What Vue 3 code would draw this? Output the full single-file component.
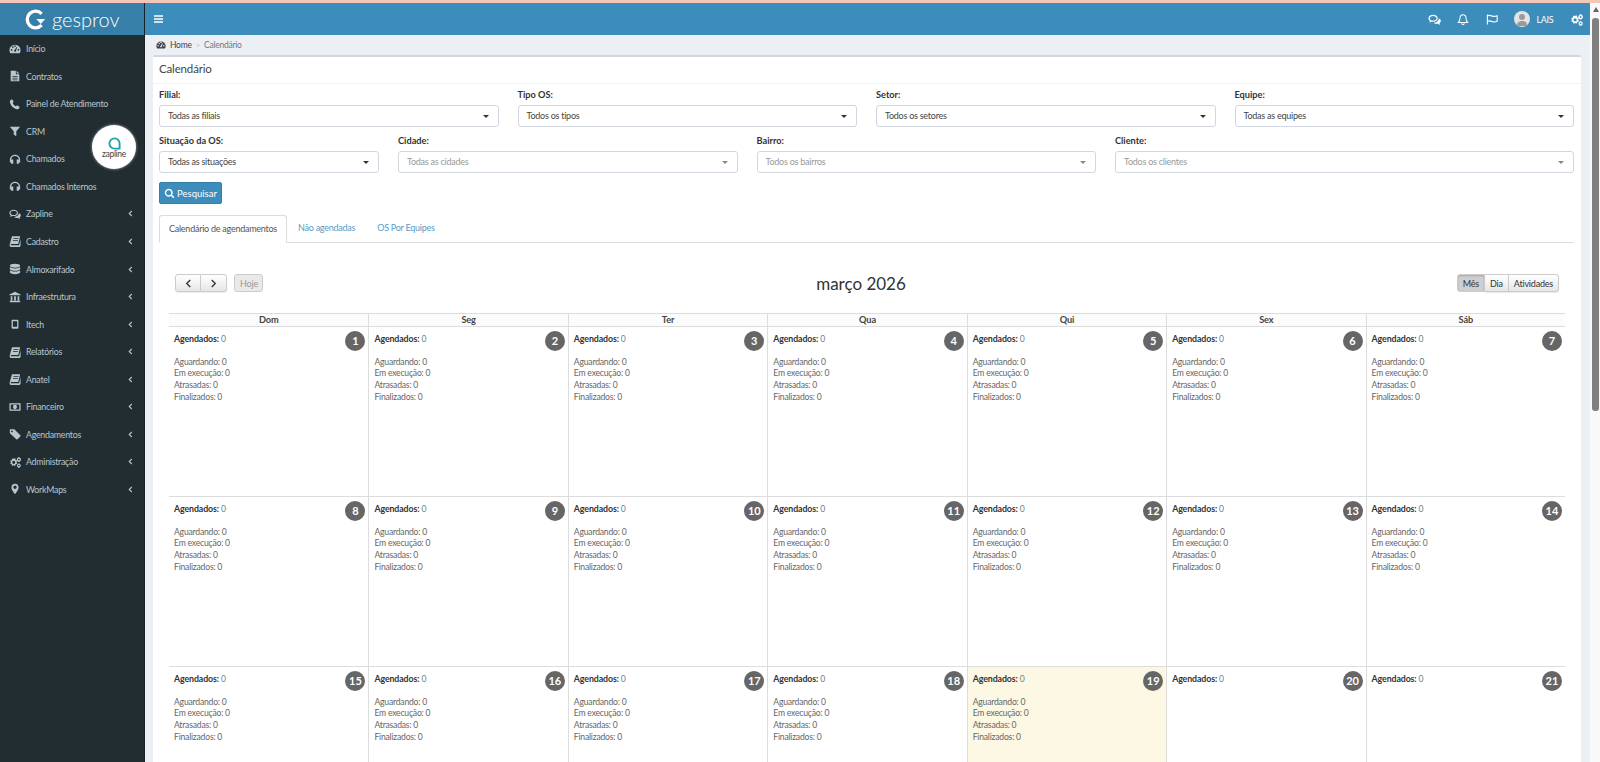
<script setup>
const icons = {
  dash: 'M7 2a6.5 6.5 0 0 0-6.5 6.5c0 1.400.4 2.600 1.100 3.500h10.800c.7-.9 1.100-2.100 1.100-3.500A6.500 6.500 0 0 0 7 2zM3 9a1 1 0 1 1 0-2 1 1 0 0 1 0 2zm1.500-3.200a1 1 0 1 1 0-2 1 1 0 0 1 0 2zM7 4.500a1 1 0 1 1 0-2 1 1 0 0 1 0 2zm.8 5.600a1.400 1.400 0 0 1-2-1.400l1-.5 2-3.600.7.300-1.200 3.900zM11 9a1 1 0 1 1 0-2 1 1 0 0 1 0 2z',
  file: 'M2 1h6v4h4v8H2zM9 1l3 3H9zM4 7v1h6V7zm0 2v1h6V9zm0 2v1h6v-1z',
  phone: 'M3.500 1.500l2 3-1.200 1.400c.6 1.500 2.300 3.200 3.800 3.800l1.400-1.200 3 2-.8 1.800c-.5.7-1.300 1-2.200.9C5.300 12.600 1.400 8.700 1 4.500c-.1-.9.2-1.700.9-2.200z',
  filter: 'M1 2h12L8.500 7.200V13l-3-2V7.200z',
  head: 'M7 2C3.700 2 1 4.500 1 7.800V11h1.500V7.800C2.500 5.300 4.500 3.500 7 3.500s4.500 1.800 4.500 4.300V11H13V7.800C13 4.500 10.300 2 7 2zM2.500 7.500h2.500v5H2.500zm6.500 0h2.500v5H9z',
  chat: 'M5.500 2C2.700 2 .5 3.600.5 5.700c0 1.100.6 2.100 1.600 2.800L1.500 10.500l2.400-1.300c.5.100 1 .2 1.600.2 2.800 0 5-1.700 5-3.700S8.300 2 5.500 2zm0 1.200c2 0 3.700 1.100 3.700 2.500S7.500 8.200 5.500 8.200 1.800 7.100 1.800 5.700 3.500 3.200 5.500 3.200zM11.500 5c.1.300.1.500.1.800 0 2.500-2.500 4.500-5.600 4.600.8.800 2.100 1.300 3.500 1.300.4 0 .8 0 1.200-.1l2.300 1.200-.6-1.900c.9-.6 1.400-1.500 1.400-2.500 0-1.100-.9-2-2.300-2.400z',
  book: 'M3.500 1.500H13l-2.200 9H3c-.8 0-1 .5-1 .8s.3.700 1 .700h8.800L13.500 5v7.500L12.500 14H3c-1.500 0-2.500-1.200-2.300-2.700zM5.300 3.500l-.3 1h6l.3-1zM4.700 6l-.3 1h6l.3-1z',
  db: 'M7 1c3.300 0 6 .9 6 2.200S10.300 5.400 7 5.400 1 4.500 1 3.200 3.700 1 7 1zM1 4.800C2.200 5.800 4.500 6.300 7 6.300s4.800-.5 6-1.500v2.100c0 1.200-2.700 2.200-6 2.200s-6-1-6-2.200zm0 3.700c1.200 1 3.500 1.500 6 1.500s4.800-.5 6-1.500v2.300C13 12 10.300 13 7 13s-6-1-6-2.200z',
  bank: 'M7 1l6.500 3v1H.5V4zM2 6h2v5H2zm4 0h2v5H6zm4 0h2v5h-2zM1 11.500h12V13H1z',
  mobile: 'M4 2h6c.6 0 1 .4 1 1v8.500c0 .6-.4 1-1 1H4c-.6 0-1-.4-1-1V3c0-.6.4-1 1-1zm.5 1.800v6.500h5V3.800z',
  money: 'M.5 2.500h13v9H.5zM2 4v6h10V4zm5 .5c1.300 0 2.300 1.100 2.300 2.500S8.300 9.500 7 9.500 4.700 8.400 4.700 7 5.700 4.500 7 4.500z',
  tag: 'M1 1.500h5.200l7 7c.4.4.4 1 0 1.400l-3.300 3.300c-.4.4-1 .4-1.400 0l-7.500-7zM3.500 3a1 1 0 1 0 0 2 1 1 0 0 0 0-2z',
  cogs: 'M5 3l1 .3.5-.8 1.300.8-.3.9.7.7.9-.2.5 1.400-.8.5v1l.8.5-.5 1.400-.9-.2-.7.7.3.9-1.300.8-.5-.8H5l-.5.8-1.300-.8.3-.9-.7-.7-.9.2L1.400 8.400l.8-.5v-1l-.8-.5.5-1.400.9.2.7-.7-.3-.9 1.300-.8zM5.500 5.600a1.800 1.800 0 1 0 0 3.600 1.800 1.800 0 0 0 0-3.600zM11.500 1l.5.700h.8l.4 1 .8.500-.3 1 .3 1-.8.500-.4 1H12l-.5.700-.5-.7h-.8l-.4-1-.8-.5.300-1-.300-1 .8-.5.4-1h.8zm0 2.200a1 1 0 1 0 0 2 1 1 0 0 0 0-2zM11.500 8.500l.5.600h.8l.3.900.7.500-.3.800.3.800-.7.500-.3.900H12l-.5.600-.5-.6h-.8l-.3-.9-.7-.5.300-.8-.3-.8.700-.5.300-.9h.8zm0 1.800a.9.900 0 1 0 0 1.800.9.900 0 0 0 0-1.800z',
  pin: 'M7 1C4.500 1 2.800 2.900 2.800 5.200 2.800 7.900 7 13 7 13s4.200-5.100 4.200-7.800C11.200 2.900 9.500 1 7 1zm0 6a2 2 0 1 1 0-4 2 2 0 0 1 0 4z',
  search: 'M6 1a5 5 0 1 0 2.900 9.100l3 3 1.400-1.400-3-3A5 5 0 0 0 6 1zm0 1.800a3.200 3.200 0 1 1 0 6.400 3.200 3.200 0 0 1 0-6.400z',
}

const menu = [
  { label: 'Início', icon: 'dash' },
  { label: 'Contratos', icon: 'file' },
  { label: 'Painel de Atendimento', icon: 'phone' },
  { label: 'CRM', icon: 'filter' },
  { label: 'Chamados', icon: 'head' },
  { label: 'Chamados Internos', icon: 'head' },
  { label: 'Zapline', icon: 'chat', sub: true },
  { label: 'Cadastro', icon: 'book', sub: true },
  { label: 'Almoxarifado', icon: 'db', sub: true },
  { label: 'Infraestrutura', icon: 'bank', sub: true },
  { label: 'Itech', icon: 'mobile', sub: true },
  { label: 'Relatórios', icon: 'book', sub: true },
  { label: 'Anatel', icon: 'book', sub: true },
  { label: 'Financeiro', icon: 'money', sub: true },
  { label: 'Agendamentos', icon: 'tag', sub: true },
  { label: 'Administração', icon: 'cogs', sub: true },
  { label: 'WorkMaps', icon: 'pin', sub: true },
]

const filtersTop = [
  { label: 'Filial:', value: 'Todas as filiais', span: 3 },
  { label: 'Tipo OS:', value: 'Todos os tipos', span: 3 },
  { label: 'Setor:', value: 'Todos os setores', span: 3 },
  { label: 'Equipe:', value: 'Todas as equipes', span: 3 },
]
const filtersBottom = [
  { label: 'Situação da OS:', value: 'Todas as situações', span: 2 },
  { label: 'Cidade:', value: 'Todas as cidades', span: 3, muted: true },
  { label: 'Bairro:', value: 'Todos os bairros', span: 3, muted: true },
  { label: 'Cliente:', value: 'Todos os clientes', span: 4, muted: true },
]

const weekDays = ['Dom', 'Seg', 'Ter', 'Qua', 'Qui', 'Sex', 'Sáb']
const days = Array.from({ length: 21 }, (_, i) => i + 1)
const counters = ['Aguardando', 'Em execução', 'Atrasadas', 'Finalizados']
</script>

<template>
  <div class="shell">
    <div class="strip"></div>
    <div class="frame">
      <aside class="sidebar">
        <div class="logo">
          <svg class="logo-mark" viewBox="0 0 24 24" width="21" height="21">
            <path d="M19 5.500A9.500 9.500 0 1 0 19 18.500" fill="none" stroke="#fff" stroke-width="3.800" />
            <path d="M13 11.500h10l-5 5.500z" fill="#fff" />
          </svg>
          <span class="logo-text">gesprov</span>
        </div>
        <nav class="menu">
          <a v-for="item in menu" :key="item.label" class="menu-item">
            <svg class="menu-icon" viewBox="0 0 14 14" width="12" height="12"><path :d="icons[item.icon]" fill="currentColor" fill-rule="evenodd" /></svg>
            <span class="menu-label">{{ item.label }}</span>
            <svg v-if="item.sub" class="menu-caret" viewBox="0 0 6 8" width="5" height="7"><path d="M4.500 1L1.500 4l3 3" fill="none" stroke="currentColor" stroke-width="1.300" /></svg>
          </a>
        </nav>
        <div class="zapline">
          <svg viewBox="0 0 14 14" width="13" height="13"><path d="M7 1.500a5.500 5.500 0 1 0 0 11h5.500V7A5.500 5.500 0 0 0 7 1.500z" fill="none" stroke="#19a6ad" stroke-width="2" /></svg>
          <span>zapline</span>
        </div>
      </aside>

      <div class="main">
        <header class="topbar">
          <svg class="burger" viewBox="0 0 12 10" width="9" height="8"><path d="M0 0h12v2H0zm0 4h12v2H0zm0 4h12v2H0z" fill="#fff" /></svg>
          <div class="top-right">
            <svg viewBox="0 0 14 14" width="13" height="13"><path :d="icons.chat" fill="#fff" fill-rule="evenodd" /></svg>
            <svg viewBox="0 0 14 14" width="12" height="13"><path d="M7 1.500c-2.400 0-3.500 1.800-3.500 4 0 2.800-1 3.800-2 5h11c-1-1.200-2-2.200-2-5 0-2.200-1.100-4-3.500-4zM5.500 11.500a1.500 1.500 0 0 0 3 0" fill="none" stroke="#fff" stroke-width="1.200" /></svg>
            <svg viewBox="0 0 14 14" width="13" height="13"><path d="M1.500 1.500v11M1.500 3c2-1 3.500-.5 5 .2s3 .8 5.500-.2v6c-2.500 1-4 .9-5.500.2S3.500 8 1.500 9" fill="none" stroke="#fff" stroke-width="1.200" /></svg>
            <span class="user">
              <span class="avatar">
                <svg viewBox="0 0 16 16" width="16" height="16"><circle cx="8" cy="6" r="3" fill="#9a9a9a" /><path d="M2.500 15c.3-3.500 2.500-5 5.500-5s5.200 1.500 5.500 5z" fill="#9a9a9a" /></svg>
              </span>
              <span class="user-name">LAIS</span>
            </span>
            <svg viewBox="0 0 14 14" width="13" height="13"><path :d="icons.cogs" fill="#fff" fill-rule="evenodd" /></svg>
          </div>
        </header>

        <div class="breadcrumb">
          <svg viewBox="0 0 14 14" width="10" height="10"><path :d="icons.dash" fill="#444" fill-rule="evenodd" /></svg>
          <span class="crumb-home">Home</span>
          <span class="crumb-sep">&gt;</span>
          <span class="crumb-current">Calendário</span>
        </div>

        <section class="panel">
          <h1 class="panel-title">Calendário</h1>
          <div class="panel-body">
            <div class="filter-grid">
              <div v-for="f in filtersTop" :key="f.label" class="field" :class="'span-' + f.span">
                <label>{{ f.label }}</label>
                <div class="select" :class="{ muted: f.muted }">{{ f.value }}<i class="arrow"></i></div>
              </div>
              <div v-for="f in filtersBottom" :key="f.label" class="field" :class="'span-' + f.span">
                <label>{{ f.label }}</label>
                <div class="select" :class="{ muted: f.muted }">{{ f.value }}<i class="arrow"></i></div>
              </div>
            </div>

            <button class="search-btn">
              <svg viewBox="0 0 14 14" width="11" height="11"><path :d="icons.search" fill="#fff" fill-rule="evenodd" /></svg>
              Pesquisar
            </button>

            <div class="tabs">
              <a class="tab active">Calendário de agendamentos</a>
              <a class="tab">Não agendadas</a>
              <a class="tab">OS Por Equipes</a>
            </div>

            <div class="calendar">
              <div class="toolbar">
                <div class="tool-left">
                  <div class="btn-group">
                    <button class="fc-btn arrow-btn"><svg viewBox="0 0 8 10" width="7" height="9"><path d="M6 1L2 5l4 4" fill="none" stroke="#333" stroke-width="1.600" /></svg></button>
                    <button class="fc-btn arrow-btn"><svg viewBox="0 0 8 10" width="7" height="9"><path d="M2 1l4 4-4 4" fill="none" stroke="#333" stroke-width="1.600" /></svg></button>
                  </div>
                  <button class="fc-btn today">Hoje</button>
                </div>
                <h2 class="month">março 2026</h2>
                <div class="btn-group tool-right">
                  <button class="fc-btn on">Mês</button>
                  <button class="fc-btn">Dia</button>
                  <button class="fc-btn">Atividades</button>
                </div>
              </div>

              <div class="week-head">
                <div v-for="d in weekDays" :key="d" class="week-day">{{ d }}</div>
              </div>
              <div class="month-grid">
                <div v-for="n in days" :key="n" class="day" :class="{ today: n === 19 }">
                  <span class="day-number">{{ n }}</span>
                  <p class="scheduled"><b>Agendados:</b> 0</p>
                  <template v-if="n < 20">
                    <p v-for="c in counters" :key="c" class="count">{{ c }}: 0</p>
                  </template>
                </div>
              </div>
            </div>
          </div>
        </section>
      </div>

      <div class="scrollbar">
        <i class="scroll-up"></i>
        <div class="scroll-thumb"></div>
      </div>
    </div>
  </div>
</template>

<style scoped>
.shell {
  width: 1600px;
  height: 762px;
  overflow: hidden;
  display: flex;
  flex-direction: column;
  font-family: "Lato", "Noto Sans", sans-serif;
  font-size: 9px;
  letter-spacing: -0.25px;
  color: #333;
  background: #ecf0f5;
}
.strip {
  height: 3px;
  flex: none;
  background: #f3c6b8;
}
.frame {
  flex: 1;
  display: flex;
  min-height: 0;
}
.sidebar {
  position: relative;
  width: 144px;
  flex: none;
  background: #222d32;
  border-right: 1px solid #1a2226;
  color: #b8c7ce;
}
.logo {
  height: 32px;
  background: #367fa9;
  display: flex;
  align-items: center;
  padding-left: 25px;
  gap: 6px;
}
.logo-text {
  color: #fff;
  font-weight: 300;
  font-size: 20px;
  letter-spacing: 0;
  line-height: 28px;
}
.menu-item {
  height: 27.54px;
  display: flex;
  align-items: center;
  padding-left: 9px;
  position: relative;
  font-size: 8.8px;
}
.menu-icon {
  width: 12px;
  flex: none;
}
.menu-label {
  margin-left: 5px;
}
.menu-caret {
  position: absolute;
  left: 128px;
}
.zapline {
  position: absolute;
  left: 92px;
  top: 122px;
  width: 44px;
  height: 44px;
  border-radius: 50%;
  background: #fff;
  box-shadow: 0 0 3px rgba(255, 255, 255, 0.6);
  display: flex;
  flex-direction: column;
  align-items: center;
  justify-content: center;
  color: #444;
  font-size: 8.5px;
  line-height: 8px;
  letter-spacing: -0.3px;
}
.main {
  flex: 1;
  min-width: 0;
}
.topbar {
  height: 32px;
  background: #3c8dbc;
  display: flex;
  align-items: center;
  justify-content: space-between;
  padding: 0 7px 0 9px;
}
.top-right {
  display: flex;
  align-items: center;
  gap: 16.500px;
  color: #fff;
}
.user {
  display: flex;
  align-items: center;
  gap: 6px;
  margin-left: -1px;
}
.avatar {
  width: 16px;
  height: 16px;
  border-radius: 50%;
  background: #e4e4e4;
  overflow: hidden;
  display: block;
}
.user-name {
  font-size: 9px;
}
.breadcrumb {
  height: 20px;
  display: flex;
  align-items: center;
  gap: 4px;
  padding-left: 11px;
  font-size: 8.500px;
  color: #777;
}
.crumb-home {
  color: #444;
}
.crumb-sep {
  color: #bbb;
  font-size: 8px;
}
.panel {
  margin-left: 8px;
  width: 1428px;
  background: #fff;
  border-top: 2px solid #d2d6de;
  border-radius: 2px;
}
.panel-title {
  margin: 0;
  height: 26px;
  padding-left: 6px;
  font-size: 11.500px;
  letter-spacing: -0.15px;
  font-weight: 400;
  line-height: 23px;
  color: #444;
  border-bottom: 1px solid #f4f4f4;
}
.panel-body {
  padding: 4px 7px 0 6px;
}
.filter-grid {
  display: grid;
  grid-template-columns: repeat(12, 1fr);
  column-gap: 19px;
  row-gap: 0;
}
.span-2 { grid-column: span 2; }
.span-3 { grid-column: span 3; }
.span-4 { grid-column: span 4; }
.field {
  height: 46px;
}
.field label {
  display: block;
  height: 17px;
  font-weight: 700;
  font-size: 9.200px;
  letter-spacing: 0;
  line-height: 14px;
  color: #333;
}
.select {
  position: relative;
  height: 22px;
  box-sizing: border-box;
  border: 1px solid #d2d6de;
  border-radius: 3px;
  padding-left: 8px;
  line-height: 20px;
  color: #444;
}
.select.muted {
  color: #999;
}
.arrow {
  position: absolute;
  right: 9px;
  top: 9px;
  border: 3px solid transparent;
  border-top: 3px solid #333;
  border-bottom: 0;
}
.select.muted .arrow {
  border-top-color: #888;
}
.search-btn {
  margin-top: 2px;
  width: 63px;
  height: 22px;
  display: flex;
  align-items: center;
  justify-content: center;
  gap: 2px;
  padding: 0;
  background: #3c8dbc;
  border: 1px solid #367fa9;
  border-radius: 2px;
  color: #fff;
  font: inherit;
  font-size: 9.500px;
}
.tabs {
  margin-top: 11px;
  height: 28px;
  box-sizing: border-box;
  display: flex;
  border-bottom: 1px solid #ddd;
}
.tab {
  padding: 0 11px;
  height: 28px;
  box-sizing: border-box;
  line-height: 26px;
  color: #5a9ac4;
}
.tab.active {
  color: #555;
  background: #fff;
  border: 1px solid #ddd;
  border-bottom-color: #fff;
  border-radius: 3px 3px 0 0;
  padding: 0 9px;
}
.calendar {
  padding: 0 9px 0 10px;
}
.toolbar {
  margin-top: 31px;
  height: 18px;
  margin-bottom: 21px;
  position: relative;
  display: flex;
  justify-content: space-between;
  padding: 0 6px;
}
.tool-left {
  display: flex;
  gap: 7px;
}
.btn-group {
  display: flex;
}
.fc-btn {
  height: 18px;
  padding: 0 5px;
  font: inherit;
  letter-spacing: -0.2px;
  color: #333;
  border: 1px solid #ccc;
  border-left-width: 0;
  background: linear-gradient(#fff, #e6e6e6);
  box-shadow: 0 1px 1px rgba(0, 0, 0, 0.08);
}
.btn-group .fc-btn:first-child {
  border-left-width: 1px;
  border-radius: 3px 0 0 3px;
}
.btn-group .fc-btn:last-child {
  border-radius: 0 3px 3px 0;
}
.arrow-btn {
  width: 26px;
  display: flex;
  align-items: center;
  justify-content: center;
}
.fc-btn.today {
  width: 29px;
  border-left-width: 1px;
  border-radius: 3px;
  color: #999;
  background: #e9e9e9;
  box-shadow: none;
}
.fc-btn.on {
  background: #cfcfcf;
  box-shadow: inset 0 1px 2px rgba(0, 0, 0, 0.2);
}
.month {
  position: absolute;
  left: 0;
  right: 12px;
  top: -2px;
  margin: 0;
  text-align: center;
  font-size: 17px;
  letter-spacing: 0;
  font-weight: 400;
  line-height: 24px;
  color: #333;
}
.week-head {
  display: grid;
  grid-template-columns: repeat(7, 1fr);
  height: 14px;
  box-sizing: border-box;
  border-top: 1px solid #ddd;
  border-bottom: 1px solid #ddd;
  background: #fcfcfc;
}
.week-day {
  text-align: center;
  font-weight: 700;
  font-size: 9.200px;
  letter-spacing: -0.1px;
  line-height: 12px;
  color: #444;
  border-left: 1px solid #ddd;
}
.week-day:first-child {
  border-left: 0;
}
.month-grid {
  display: grid;
  grid-template-columns: repeat(7, 1fr);
  grid-auto-rows: 170px;
}
.day {
  position: relative;
  box-sizing: border-box;
  padding: 6px 4px 0 5px;
  border-left: 1px solid #ddd;
  border-bottom: 1px solid #ddd;
  font-size: 8.600px;
  letter-spacing: -0.2px;
  color: #666;
}
.day:nth-child(7n + 1) {
  border-left: 0;
}
.day.today {
  background: #fcf8e3;
}
.day p {
  margin: 0;
  line-height: 11.700px;
}
.day .scheduled {
  margin-bottom: 11px;
  color: #667f90;
}
.scheduled b {
  color: #333;
  font-size: 8.800px;
  letter-spacing: -0.1px;
}
.day-number {
  position: absolute;
  right: 3px;
  top: 4px;
  width: 20px;
  height: 20px;
  border-radius: 50%;
  background: #666;
  color: #fff;
  font-weight: 700;
  font-size: 11px;
  letter-spacing: 0;
  line-height: 20px;
  text-align: center;
}
.scrollbar {
  position: relative;
  width: 10px;
  flex: none;
  background: #f9f9f9;
}
.scroll-up {
  position: absolute;
  right: 1px;
  top: 4px;
  border: 3.500px solid transparent;
  border-bottom: 5px solid #666;
  border-top: 0;
}
.scroll-thumb {
  position: absolute;
  right: 1px;
  top: 15px;
  width: 7px;
  height: 393px;
  background: #808080;
  border-radius: 3px;
}
</style>

<style>
html, body {
  overflow: hidden;
}
</style>
